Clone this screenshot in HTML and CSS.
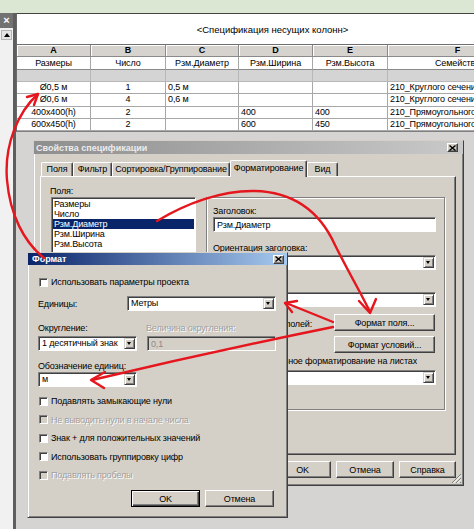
FILE: index.html
```html
<!DOCTYPE html>
<html lang="ru">
<head>
<meta charset="utf-8">
<title>Свойства спецификации</title>
<link rel="stylesheet" href="styles.css">
</head>
<body>
<div class="screen">
  <div class="topbar"></div>
  <div class="workspace">
    <aside class="browser">
      <div class="browser-head">×</div>
      <div class="browser-body"><span class="scroll-up"></span></div>
    </aside>
    <section class="view">
      <div class="sheet">
        <div class="sched-title">&lt;Спецификация несущих колонн&gt;</div>
        <div class="sched">
          <div class="c hd">A</div><div class="c hd">B</div><div class="c hd">C</div><div class="c hd">D</div><div class="c hd">E</div><div class="c hd">F</div>
          <div class="c nm">Размеры</div><div class="c nm">Число</div><div class="c nm">Рзм.Диаметр</div><div class="c nm">Рзм.Ширина</div><div class="c nm">Рзм.Высота</div><div class="c nm">Семейство</div>
          <div class="c gr"></div><div class="c gr"></div><div class="c gr"></div><div class="c gr"></div><div class="c gr"></div><div class="c gr"></div>
          <div class="c ctr">Ø0,5 м</div><div class="c ctr">1</div><div class="c">0,5 м</div><div class="c"></div><div class="c"></div><div class="c">210_Круглого сечения</div>
          <div class="c ctr">Ø0,6 м</div><div class="c ctr">4</div><div class="c">0,6 м</div><div class="c"></div><div class="c"></div><div class="c">210_Круглого сечения</div>
          <div class="c ctr">400x400(h)</div><div class="c ctr">2</div><div class="c"></div><div class="c">400</div><div class="c">400</div><div class="c">210_Прямоугольного</div>
          <div class="c ctr">600x450(h)</div><div class="c ctr">2</div><div class="c"></div><div class="c">600</div><div class="c">450</div><div class="c">210_Прямоугольного</div>
        </div>
      </div>
    </section>
  </div>

  <div class="dlg props">
    <div class="cap cap-inactive">
      <span class="cap-text">Свойства спецификации</span>
      <span class="xbtn"><svg width="7" height="6" viewBox="0 0 7 6"><path d="M0.5 0.5 L6.5 5.5 M6.5 0.5 L0.5 5.5" stroke="#000" stroke-width="1.4"/></svg></span>
    </div>
    <div class="props-body">
      <div class="tabs">
        <div class="tab w1">Поля</div>
        <div class="tab w2">Фильтр</div>
        <div class="tab w3">Сортировка/Группирование</div>
        <div class="tab w4 active">Форматирование</div>
        <div class="tab w5">Вид</div>
      </div>
      <div class="tabpanel">
        <div class="fields-col">
          <div class="lbl">Поля:</div>
          <ul class="listbox">
            <li>Размеры</li>
            <li>Число</li>
            <li class="sel">Рзм.Диаметр</li>
            <li>Рзм.Ширина</li>
            <li>Рзм.Высота</li>
          </ul>
        </div>
        <div class="group">
          <div class="lbl">Заголовок:</div>
          <div class="edit mt1">Рзм.Диаметр</div>
          <div class="lbl mt11">Ориентация заголовка:</div>
          <div class="combo mt2"><span class="combo-val">Горизонтально</span><span class="combo-btn"></span></div>
          <div class="lbl mt10">Выравнивание:</div>
          <div class="combo mt2"><span class="combo-val">Слева</span><span class="combo-btn"></span></div>
          <div class="frow mt7">
            <span class="lbl low clip"><span class="clip-in">Форматирование полей:</span></span>
            <button type="button" class="btn fbtn">Формат поля...</button>
          </div>
          <div class="frow mt5 end">
            <button type="button" class="btn fbtn">Формат условий...</button>
          </div>
          <div class="lbl mt3 clip wide"><span class="clip-in">Показать условное форматирование на листах</span></div>
          <div class="combo mt4"><span class="combo-val"></span><span class="combo-btn"></span></div>
        </div>
      </div>
      <div class="btnrow">
        <button type="button" class="btn b57">OK</button>
        <button type="button" class="btn b58">Отмена</button>
        <button type="button" class="btn b57">Справка</button>
      </div>
    </div>
    <svg class="grip" width="11" height="11" viewBox="0 0 11 11">
      <path d="M10 1 L1 10 M10 5 L5 10 M10 9 L9 10" stroke="#808080" stroke-width="1"/>
      <path d="M10 2.5 L2.5 10 M10 6.5 L6.5 10" stroke="#fff" stroke-width="1"/>
    </svg>
  </div>

  <div class="dlg fmt">
    <div class="cap cap-active">
      <span class="cap-text">Формат</span>
      <span class="xbtn"><svg width="7" height="6" viewBox="0 0 7 6"><path d="M0.5 0.5 L6.5 5.5 M6.5 0.5 L0.5 5.5" stroke="#000" stroke-width="1.4"/></svg></span>
    </div>
    <div class="fmt-body">
      <div class="chk first"><span class="cb"></span>Использовать параметры проекта</div>
      <div class="unitrow">
        <span class="lbl unitlbl">Единицы:</span>
        <div class="combo unitcombo"><span class="combo-val">Метры</span><span class="combo-btn"></span></div>
      </div>
      <div class="rndlbl">
        <span class="lbl rl1">Округление:</span>
        <span class="lbl dis">Величина округления:</span>
      </div>
      <div class="rndrow">
        <div class="combo small"><span class="combo-val">1 десятичный знак</span><span class="combo-btn"></span></div>
        <div class="edit disabled rndedit">0,1</div>
      </div>
      <div class="lbl mt10">Обозначение единиц:</div>
      <div class="combo small mt1"><span class="combo-val">м</span><span class="combo-btn"></span></div>
      <div class="checks">
        <div class="chk"><span class="cb"></span>Подавлять замыкающие нули</div>
        <div class="chk dis"><span class="cb"></span>Не выводить нули в начале числа</div>
        <div class="chk"><span class="cb"></span>Знак + для положительных значений</div>
        <div class="chk"><span class="cb"></span>Использовать группировку цифр</div>
        <div class="chk dis"><span class="cb"></span>Подавлять пробелы</div>
      </div>
      <div class="btnrow fmt-btns">
        <button type="button" class="btn default b69">OK</button>
        <button type="button" class="btn b69">Отмена</button>
      </div>
    </div>
  </div>

  <svg class="marks" width="474" height="529" viewBox="0 0 474 529">
    <g fill="none" stroke="#e5161d" stroke-width="2.4" stroke-linecap="round" stroke-linejoin="round">
      <path d="M38 94 C 18 112, 4 145, 7 180 C 10 215, 24 242, 44 258"/>
      <path d="M27 97 L38 94 L34 105"/>
      <path d="M157 221 C 215 186, 300 168, 335 245 C 350 275, 362 295, 370 312"/>
      <path d="M359 301 L370 313 L376 299"/>
      <path d="M333 322 L286 303"/>
      <path d="M297 301 L285 303 L292 312"/>
      <path d="M333 327 Q 210 352, 92 380"/>
      <path d="M105 372 L91 380 L104 388"/>
    </g>
  </svg>
</div>
</body>
</html>
```

FILE: styles.css
```css
* { box-sizing: border-box; }
html, body { margin: 0; padding: 0; }
body {
  width: 474px;
  height: 529px;
  overflow: hidden;
  background: #d5d4d2;
  font-family: "Liberation Sans", Arial, sans-serif;
  font-size: 9px;
  letter-spacing: -0.15px;
  color: #000;
}
.screen { position: relative; width: 474px; height: 529px; overflow: hidden; }

/* background application */
.topbar { height: 13px; background: #dbe6d3; }
.workspace { display: flex; height: 516px; }
.browser { width: 13px; background: #f1f1f1; display: flex; flex-direction: column; flex: none; }
.browser-head {
  height: 15px; background: #727272; color: #fff;
  font-size: 11px; font-weight: bold; line-height: 14px; text-align: center;
}
.browser-body { flex: 1; padding: 2px 1px 0 1px; }
.scroll-up {
  display: block; width: 11px; height: 10px; position: relative;
  background: #e4e4e4; border: 1px solid #b4b4b4;
}
.scroll-up::after {
  content: ""; position: absolute; left: 2px; top: 2px;
  border-left: 3px solid transparent; border-right: 3px solid transparent;
  border-bottom: 4px solid #000;
}
.view { flex: 1; overflow: hidden; border-left: 3px solid #5e5e5e; background: #d5d4d2; }
.sheet { width: 512px; border-left: 1px solid #6a6a6a; border-top: 1px solid #444; background: #fff; border-bottom: 1px solid #808080; }
.sched-title {
  height: 31px; line-height: 31px; text-align: center;
  font-size: 9.5px; letter-spacing: 0;
  border-bottom: 1px solid #707070;
}
.sched {
  display: grid;
  grid-template-columns: 74px 75px 73px 74px 75px 1fr;
  grid-template-rows: 12px 13px 12px 12px 13px 12px 12px;
  letter-spacing: -0.1px;
}
.c {
  border-right: 1px solid #a8a8a8; border-bottom: 1px solid #a8a8a8;
  padding-left: 2px; line-height: 11px; white-space: nowrap; overflow: hidden;
}
.c.hd { background: #d6d3ce; text-align: center; font-weight: bold; border-color: #8a8a8a; box-shadow: inset 1px 1px #fff; padding: 0; }
.c.nm { text-align: center; padding: 0; line-height: 12px; border-bottom-color: #8a8a8a; }
.c.gr { background: #d4d4d4; border-color: #b8b8b8; }
.c.ctr { text-align: center; padding: 0; }

/* dialogs */
.dlg {
  position: absolute;
  background: #d4d0c8;
  border: 1px solid; border-color: #d4d0c8 #404040 #404040 #d4d0c8;
  box-shadow: inset 1px 1px #fff, inset -1px -1px #808080;
}
.props { left: 33px; top: 140px; width: 431px; height: 346px; }
.fmt { left: 27px; top: 252px; width: 261px; height: 266px; z-index: 2; }

.cap { display: flex; align-items: center; justify-content: space-between; font-weight: bold; letter-spacing: 0; white-space: nowrap; }
.cap-inactive { height: 13px; padding: 0 5px 0 2px; background: linear-gradient(90deg, #8e8e8e, #c9c9c9); color: #ececec; }
.cap-active { height: 12px; padding: 0 3px 0 4px; background: linear-gradient(90deg, #0a246a, #a6caf0); color: #fff; }
.xbtn {
  width: 11px; height: 9px; display: flex; align-items: center; justify-content: center;
  background: #d4d0c8; border: 1px solid; border-color: #fff #404040 #404040 #fff;
  box-shadow: inset -1px -1px #808080;
}

.props-body { padding: 6px 7px 0 6px; }
.tabs { display: flex; align-items: flex-end; height: 16px; padding-left: 1px; position: relative; z-index: 2; }
.tab {
  height: 14px; line-height: 13px; text-align: center; white-space: nowrap;
  border: 1px solid; border-color: #fff #404040 transparent #fff; border-bottom: 0;
  box-shadow: inset -1px 0 #808080; border-radius: 2px 2px 0 0;
  background: #d4d0c8;
}
.tab.active { height: 17px; margin-bottom: -1px; line-height: 15px; }
.w1 { width: 32px; } .w2 { width: 39px; } .w3 { width: 118px; } .w4 { width: 77px; } .w5 { width: 31px; }
.tabpanel {
  position: relative; z-index: 1;
  height: 279px; display: flex; align-items: flex-start;
  border: 1px solid; border-color: #fff #404040 #404040 #fff;
  box-shadow: inset -1px -1px #808080;
  padding: 9px 9px 0 9px;
}
.fields-col { width: 146px; flex: none; }
.fields-col .lbl { height: 11px; line-height: 11px; }
.listbox {
  list-style: none; margin: 0 0 0 1px; width: 145px; height: 60px;
  background: #fff; border: 1px solid; border-color: #808080 #fff #fff #808080;
  box-shadow: inset 1px 1px #404040; padding: 1px 1px 0 1px; overflow: hidden;
}
.listbox li { height: 10px; line-height: 10px; padding-left: 1px; white-space: nowrap; }
.listbox li.sel { background: #0a246a; color: #fff; }

.group {
  width: 239px; height: 213px; margin: 11px 0 0 10px; flex: none;
  border: 1px solid #808080; box-shadow: inset 1px 1px #fff, 1px 1px #fff;
  padding: 8px 8px 0 6px;
}
.lbl { height: 10px; line-height: 10px; white-space: nowrap; }
.lbl.dis { color: #a0a0a0; text-shadow: 1px 1px #fff; }
.lbl.low { margin-top: 5px; }
.clip { display: flex; justify-content: flex-end; overflow: hidden; width: 24px; margin-left: 75px; }
.clip.wide { width: 129px; }
.clip-in { flex: none; }
.mt1 { margin-top: 1px; } .mt2 { margin-top: 2px; } .mt3 { margin-top: 3px; } .mt4 { margin-top: 4px; }
.mt5 { margin-top: 5px; } .mt7 { margin-top: 7px; } .mt10 { margin-top: 10px; } .mt11 { margin-top: 11px; }

.edit {
  height: 15px; background: #fff; line-height: 11px; padding: 2px 3px 1px; white-space: nowrap;
  border: 1px solid; border-color: #808080 #fff #fff #808080; box-shadow: inset 1px 1px #404040;
}
.edit.disabled { background: #d4d0c8; color: #8a8a8a; }
.combo {
  display: flex; height: 15px; background: #fff; padding: 1px;
  border: 1px solid; border-color: #808080 #fff #fff #808080; box-shadow: inset 1px 1px #404040;
}
.combo-val { flex: 1; line-height: 11px; padding-left: 2px; white-space: nowrap; overflow: hidden; }
.combo-btn {
  width: 11px; height: 11px; flex: none; position: relative;
  background: #d4d0c8; border: 1px solid; border-color: #d4d0c8 #404040 #404040 #d4d0c8;
  box-shadow: inset 1px 1px #fff, inset -1px -1px #808080;
}
.combo-btn::after {
  content: ""; position: absolute; left: 2px; top: 3px;
  border-left: 2.5px solid transparent; border-right: 2.5px solid transparent;
  border-top: 3px solid #000;
}

.frow { display: flex; justify-content: space-between; align-items: flex-start; height: 17px; }
.frow.end { justify-content: flex-end; }
.btn {
  font: inherit; letter-spacing: inherit; color: #000;
  height: 17px; padding: 0; margin: 0; text-align: center; line-height: 14px;
  background: #d4d0c8; border: 1px solid; border-color: #fff #404040 #404040 #fff;
  box-shadow: inset -1px -1px #808080;
}
.fbtn { width: 101px; margin-right: 1px; }
.btn.default { border-color: #000; box-shadow: inset 1px 1px #fff, inset -1px -1px #404040, inset -2px -2px #808080; }
.btnrow { display: flex; justify-content: flex-end; gap: 5px; margin-top: 6px; }
.b57 { width: 57px; } .b58 { width: 58px; } .b69 { width: 69px; }

.chk { display: flex; align-items: center; gap: 3px; height: 10px; white-space: nowrap; }
.chk.dis { color: #a0a0a0; text-shadow: 1px 1px #fff; }
.cb {
  width: 9px; height: 9px; flex: none; background: #fff;
  border: 1px solid; border-color: #808080 #fff #fff #808080; box-shadow: inset 1px 1px #404040;
}
.chk.dis .cb { background: #d4d0c8; }

.grip { position: absolute; right: 1px; bottom: 1px; }

/* format dialog */
.fmt-body { padding: 0 11px 0 10px; }
.fmt-body > .chk.first { margin-top: 11px; height: 12px; padding-left: 1px; }
.unitrow { display: flex; align-items: center; margin-top: 8px; height: 15px; }
.unitlbl { width: 89px; flex: none; }
.unitcombo { width: 149px; }
.rndlbl { display: flex; margin-top: 12px; }
.rl1 { width: 108px; flex: none; }
.rndrow { display: flex; gap: 10px; margin-top: 3px; }
.combo.small { width: 99px; }
.rndedit { width: 129px; }
.checks { display: flex; flex-direction: column; margin-top: 5px; }
.checks .chk { height: 18.5px; padding-left: 1px; }
.fmt-btns { margin-top: 5.5px; padding-right: 2px; }

.marks { position: absolute; left: 0; top: 0; z-index: 10; pointer-events: none; }
```
